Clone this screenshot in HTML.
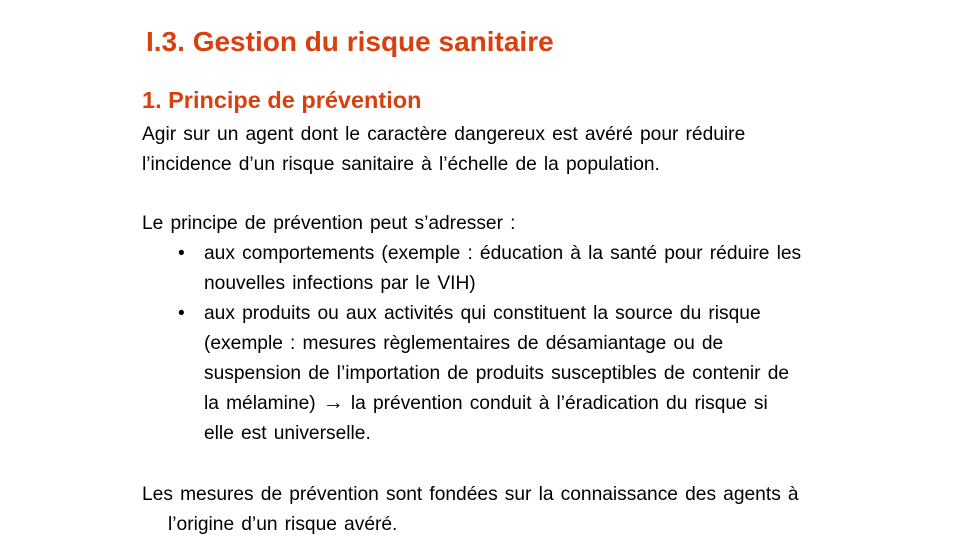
<!DOCTYPE html><html><head><meta charset="utf-8"><style>
body{margin:0;width:960px;height:540px;background:#fff;position:relative;overflow:hidden;font-family:"Liberation Sans",sans-serif}
div{position:absolute;white-space:nowrap}
.t{left:146px;top:26px;font-size:28px;font-weight:bold;color:#D9400F}
.h{left:142px;top:87px;font-size:23.5px;font-weight:bold;color:#D9400F}
.l{font-size:19.2px;line-height:30px;color:#000;word-spacing:1.8px}
.a{font-size:21px;line-height:0}
</style></head><body>
<div class="t">I.3. Gestion du risque sanitaire</div>
<div class="h">1. Principe de prévention</div>
<div class="l" style="left:142px;top:120px">Agir sur un agent dont le caractère dangereux est avéré pour réduire</div>
<div class="l" style="left:142px;top:150px">l’incidence d’un risque sanitaire à l’échelle de la population.</div>
<div class="l" style="left:142px;top:209px">Le principe de prévention peut s’adresser :</div>
<div class="l" style="left:178px;top:239px">•</div>
<div class="l" style="left:204px;top:239px">aux comportements (exemple : éducation à la santé pour réduire les</div>
<div class="l" style="left:204px;top:269px">nouvelles infections par le VIH)</div>
<div class="l" style="left:178px;top:299px">•</div>
<div class="l" style="left:204px;top:299px">aux produits ou aux activités qui constituent la source du risque</div>
<div class="l" style="left:204px;top:329px">(exemple : mesures règlementaires de désamiantage ou de</div>
<div class="l" style="left:204px;top:359px">suspension de l’importation de produits susceptibles de contenir de</div>
<div class="l" style="left:204px;top:389px">la mélamine) <span class="a">→</span> la prévention conduit à l’éradication du risque si</div>
<div class="l" style="left:204px;top:419px">elle est universelle.</div>
<div class="l" style="left:142px;top:480px">Les mesures de prévention sont fondées sur la connaissance des agents à</div>
<div class="l" style="left:168px;top:510px">l’origine d’un risque avéré.</div>
</body></html>
